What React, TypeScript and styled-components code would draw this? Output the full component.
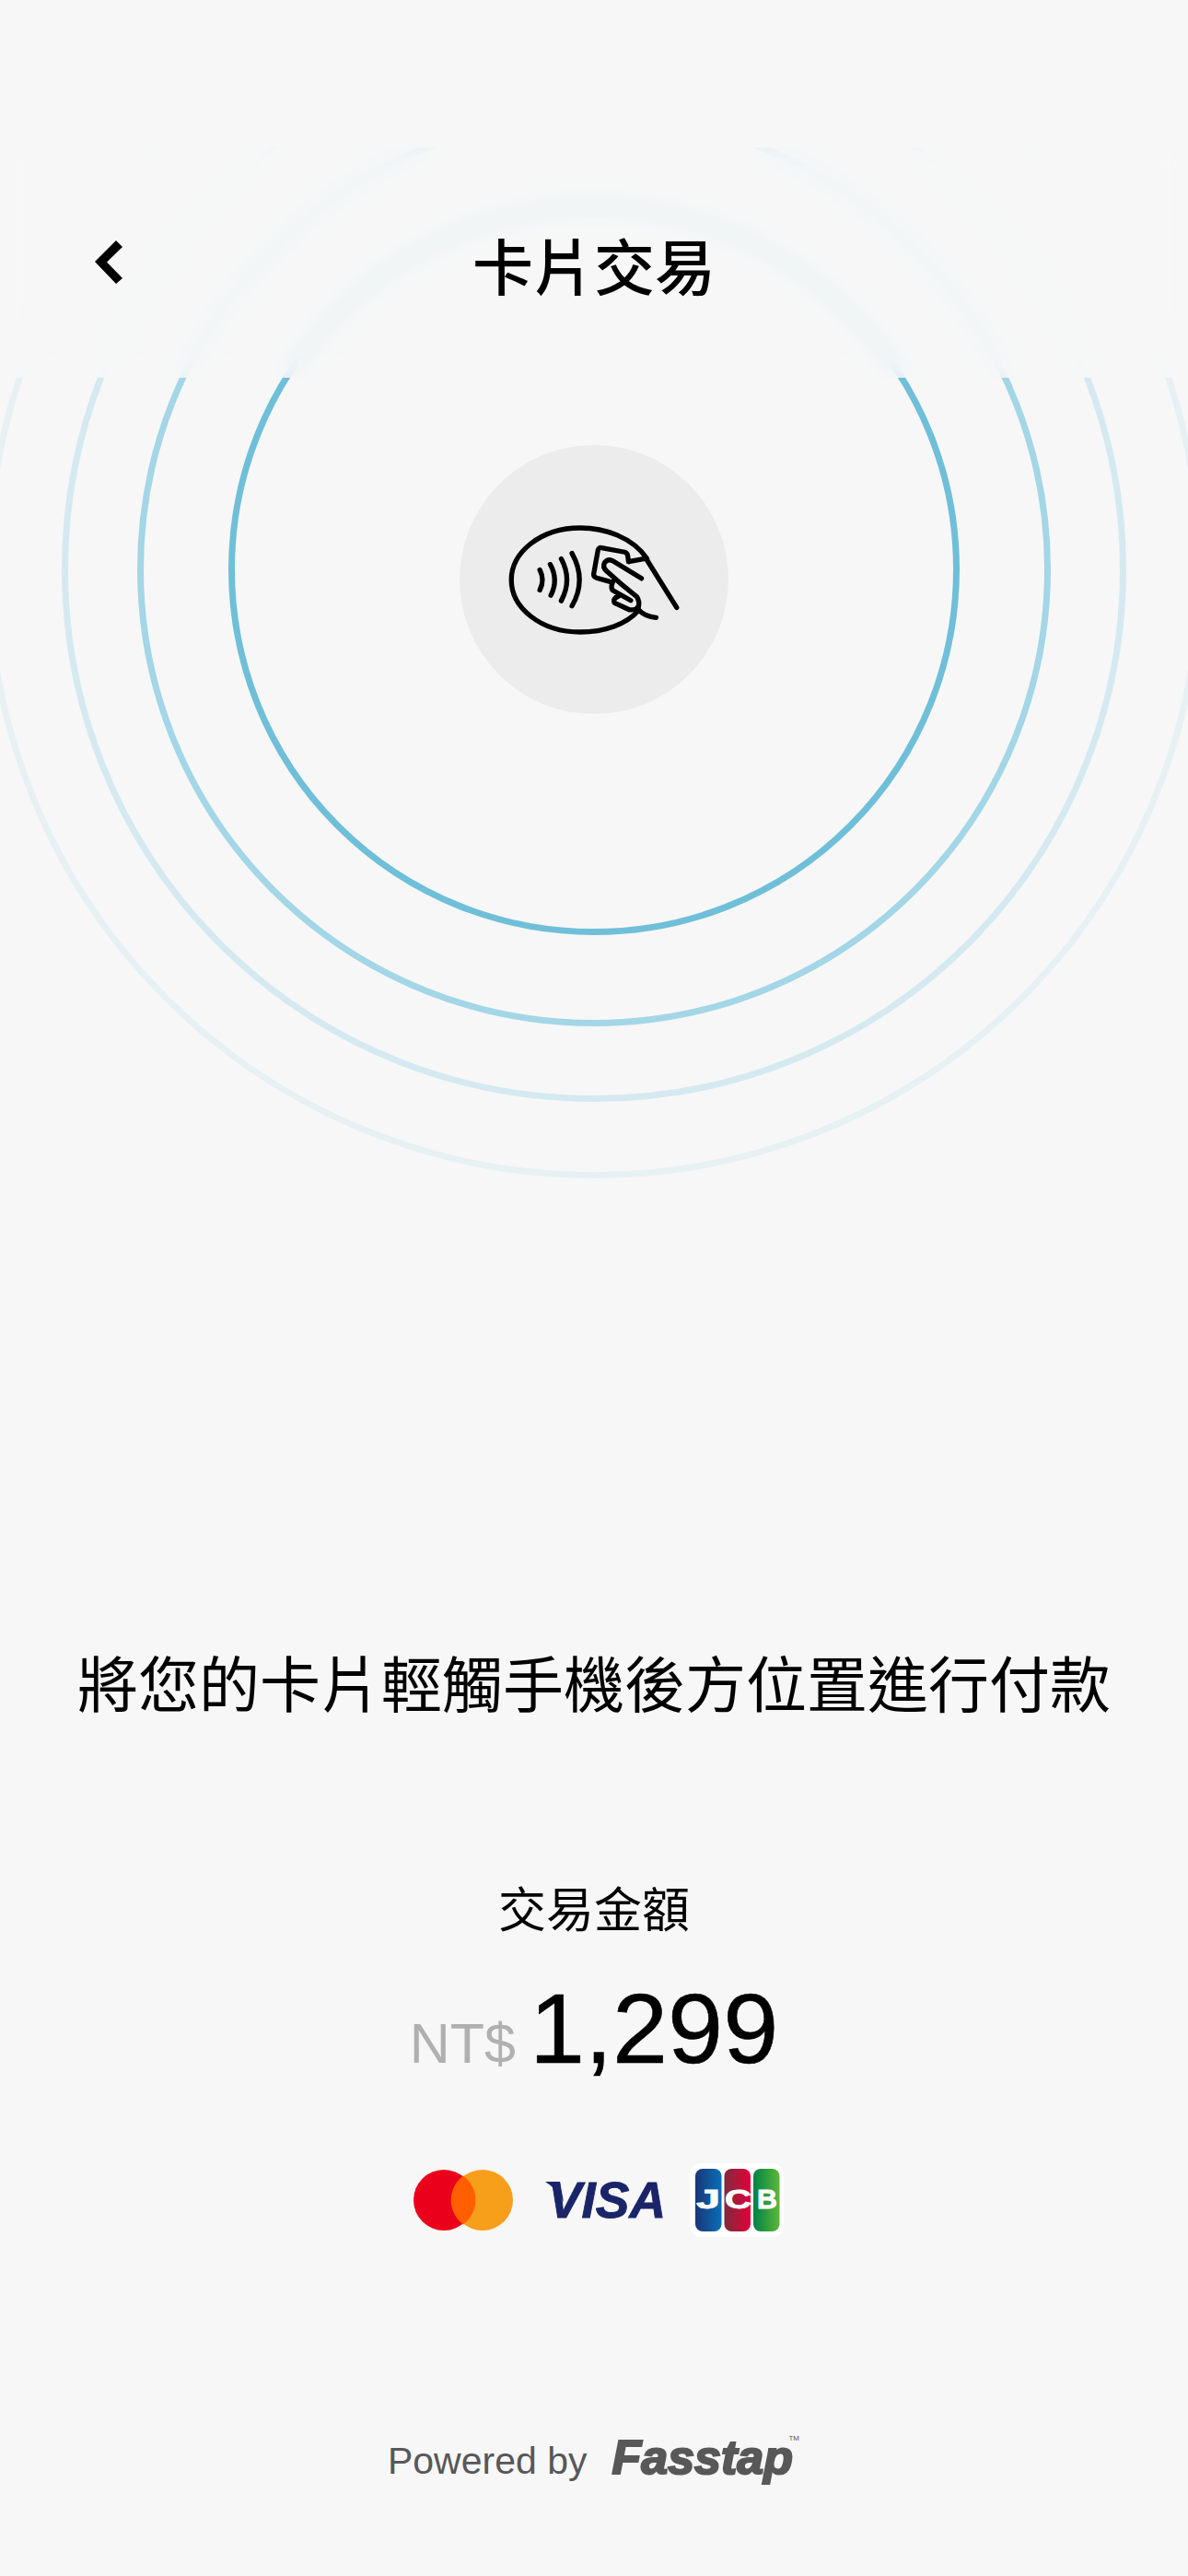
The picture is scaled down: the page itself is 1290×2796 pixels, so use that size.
import React from "react";
import styled, { createGlobalStyle } from "styled-components";

const Global = createGlobalStyle`
  html, body { margin: 0; padding: 0; background: #f7f7f7; }
  * { box-sizing: border-box; }
`;

const CJK = `"Noto Sans CJK TC", "Liberation Sans", sans-serif`;
const LATIN = `"Liberation Sans", Arial, sans-serif`;

const Page = styled.main`
  width: 1290px;
  height: 2796px;
  overflow: hidden;
  background: #f7f7f7;
  display: flex;
  flex-direction: column;
  align-items: center;
  padding-top: 160px;
`;

const Stage = styled.section`
  position: relative;
  width: 100%;
  height: 1300px;
  flex: none;
  overflow: hidden;
`;

const Ring = styled.div<{ $size: number; $color: string }>`
  position: absolute;
  left: 50%;
  top: 458px;
  width: ${(p) => p.$size}px;
  height: ${(p) => p.$size}px;
  margin-left: ${(p) => -p.$size / 2}px;
  margin-top: ${(p) => -p.$size / 2}px;
  border-radius: 50%;
  border: 7px solid ${(p) => p.$color};
`;

const Header = styled.header`
  position: absolute;
  inset: 0 0 auto 0;
  height: 250px;
  background: rgba(247, 247, 247, 0.78);
  backdrop-filter: blur(12px);
  display: flex;
  justify-content: center;
  padding-top: 74px;
`;

const BackIcon = styled.svg`
  position: absolute;
  left: 100px;
  top: 99px;
  width: 36px;
  height: 52px;
`;

const Title = styled.h1`
  margin: 0;
  font: 500 66px/104px ${CJK};
  color: #000;
`;

const TapBadge = styled.div`
  position: absolute;
  left: 499px;
  top: 323px;
  width: 292px;
  height: 292px;
  border-radius: 50%;
  background: #ececec;
  display: flex;
  align-items: center;
  justify-content: center;
`;

const TapIcon = styled.svg`
  width: 190px;
  height: 123px;
  fill: none;
  stroke: #000;
  stroke-width: 16;
  stroke-linecap: round;
  stroke-linejoin: round;
`;

const Message = styled.p`
  margin: 319px 0 0;
  font: 400 66px/90px ${CJK};
  color: #000;
  white-space: nowrap;
`;

const AmountLabel = styled.div`
  margin-top: 166px;
  font: 400 52px/70px ${CJK};
  color: #000;
`;

const AmountRow = styled.div`
  margin-top: 37px;
  display: flex;
  align-items: baseline;
  gap: 15px;
  height: 120px;
`;

const Currency = styled.span`
  font: 400 61px/120px ${LATIN};
  color: #b0b0b0;
`;

const Amount = styled.span`
  font: 400 108px/120px ${LATIN};
  color: #000;
  -webkit-text-stroke: 0.6px #000;
`;

const Brands = styled.div`
  margin-top: 86px;
  height: 80px;
  padding-left: 10px;
  display: flex;
  align-items: center;
`;

const MasterLogo = styled.svg`
  width: 108px;
  height: 66px;
  margin-right: 35px;
`;

const VisaLogo = styled.svg`
  width: 136px;
  height: 64px;
  margin-right: 21px;
`;

const VisaWord = styled.text`
  font: italic 700 56px ${LATIN};
  fill: #1a2569;
  stroke: #1a2569;
  stroke-width: 0.9px;
`;

const JcbLogo = styled.svg`
  width: 102px;
  height: 80px;
`;

const JcbLetter = styled.text`
  font: 700 29px ${LATIN};
  fill: #fff;
  stroke: #fff;
  stroke-width: 0.8px;
`;

const Footer = styled.footer`
  margin-top: 215px;
  padding-right: 8px;
  display: flex;
  align-items: baseline;
  gap: 27px;
  color: #585858;
`;

const PoweredBy = styled.span`
  font: 400 41px/48px ${LATIN};
`;

const Wordmark = styled.span`
  position: relative;
  font: italic 700 52px/48px ${LATIN};
  -webkit-text-stroke: 2.2px #585858;
`;

const Trademark = styled.sup`
  position: absolute;
  right: -7px;
  top: -1px;
  font: 400 8px/10px ${LATIN};
  -webkit-text-stroke: 0;
`;

export default function App() {
  return (
    <Page>
      <Global />
      <Stage>
        <Ring $size={1322} $color="#e7f1f4" />
        <Ring $size={1156} $color="#d5e9f0" />
        <Ring $size={992} $color="#a3d6e6" />
        <Ring $size={794} $color="#6fbfd9" />
        <TapBadge>
          <TapIcon viewBox="210 290 570 370">
            <path d="M668 405C620 335 530 305 450 305C320 305 225 385 225 475C225 565 320 645 450 645C530 645 600 620 640 575" />
            <path d="M318 442Q335 475 318 508M352 424Q380 475 354 525M388 406Q425 475 388 543M423 388Q472 475 423 560" />
            <g transform="translate(450 330)">
              <path d="M158 85L155 65Q153 56 145 54L70 40Q60 38 58 48L44 125Q43 135 53 138L95 150" />
              <path d="M158 85L215 75L315 235" />
              <path d="M200 140L105 82Q90 75 80 88Q72 102 85 115L130 155L185 200Q195 215 190 235" />
              <path d="M110 145Q98 165 105 178L165 212" />
              <path d="M125 198Q105 205 112 220L160 242Q185 245 190 230" />
              <path d="M188 240Q210 265 248 268" />
            </g>
          </TapIcon>
        </TapBadge>
        <Header>
          <BackIcon viewBox="0 0 36 52">
            <polygon points="3,25 26,2 33,9 16,25.5 33,43 26,49" fill="#000" />
          </BackIcon>
          <Title>卡片交易</Title>
        </Header>
      </Stage>
      <Message>將您的卡片輕觸手機後方位置進行付款</Message>
      <AmountLabel>交易金額</AmountLabel>
      <AmountRow>
        <Currency>NT$</Currency>
        <Amount>1,299</Amount>
      </AmountRow>
      <Brands>
        <MasterLogo viewBox="0 0 108 66">
          <circle cx="33" cy="33" r="33" fill="#eb001b" />
          <circle cx="75" cy="33" r="33" fill="#f79e1b" />
          <path d="M54 6.5a33 33 0 0 1 0 53a33 33 0 0 1 0-53z" fill="#ff5f00" />
        </MasterLogo>
        <VisaLogo viewBox="0 -10 136 64">
          <VisaWord x="3" y="41" textLength="128" lengthAdjust="spacingAndGlyphs">VISA</VisaWord>
          <path d="M0 2H16L20 24Q12 9 0 2Z" fill="#1a2569" />
        </VisaLogo>
        <JcbLogo viewBox="0 0 102 80">
          <defs>
            <linearGradient id="jb"><stop offset="0" stopColor="#1c3578" /><stop offset="1" stopColor="#0770b8" /></linearGradient>
            <linearGradient id="jr"><stop offset="0" stopColor="#7d2c3b" /><stop offset="1" stopColor="#e4003a" /></linearGradient>
            <linearGradient id="jg"><stop offset="0" stopColor="#008246" /><stop offset="1" stopColor="#5cb838" /></linearGradient>
          </defs>
          <rect width="102" height="80" rx="12" fill="#fff" />
          <rect x="6" y="6" width="28.5" height="68" rx="8" fill="url(#jb)" />
          <rect x="37.5" y="6" width="28.5" height="68" rx="8" fill="url(#jr)" />
          <rect x="69" y="6" width="28.5" height="68" rx="8" fill="url(#jg)" />
          <JcbLetter x="7" y="49" textLength="26" lengthAdjust="spacingAndGlyphs">J</JcbLetter>
          <JcbLetter x="38" y="49" textLength="29" lengthAdjust="spacingAndGlyphs">C</JcbLetter>
          <JcbLetter x="73" y="49" textLength="22" lengthAdjust="spacingAndGlyphs">B</JcbLetter>
        </JcbLogo>
      </Brands>
      <Footer>
        <PoweredBy>Powered by</PoweredBy>
        <Wordmark>
          Fasstap
          <Trademark>TM</Trademark>
        </Wordmark>
      </Footer>
    </Page>
  );
}
